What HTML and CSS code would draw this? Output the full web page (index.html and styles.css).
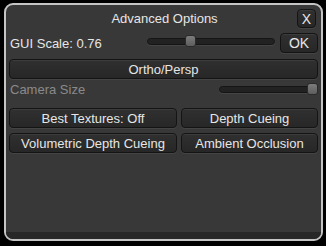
FILE: index.html
```html
<!DOCTYPE html>
<html lang="en">
  <head>
    <meta charset="utf-8" />
    <title>Advanced Options</title>
    <link rel="stylesheet" href="styles.css">
  </head>
  <body>
    <div class="panel">
      <div class="title-row">
        <span class="title">Advanced Options</span>
        <button class="btn btn-close">X</button>
      </div>

      <div class="scale-row">
        <span class="label">GUI Scale: 0.76</span>
        <div class="slider scale-slider">
          <div class="thumb" style="left: 30%"></div>
        </div>
        <button class="btn btn-ok">OK</button>
      </div>

      <button class="btn btn-wide">Ortho/Persp</button>

      <div class="camera-row">
        <span class="label disabled">Camera Size</span>
        <div class="slider camera-slider">
          <div class="thumb thumb-end"></div>
        </div>
      </div>

      <div class="toggles">
        <button class="btn">Best Textures: Off</button>
        <button class="btn">Depth Cueing</button>
        <button class="btn">Volumetric Depth Cueing</button>
        <button class="btn">Ambient Occlusion</button>
      </div>

      <div class="footer"></div>
    </div>
  </body>
</html>
```

FILE: styles.css
```css
body {
  margin: 0;
  background: #000;
  font-family: "Liberation Sans", Arial, sans-serif;
  font-size: 13px;
  color: #e6e6e6;
}
.panel {
  box-sizing: border-box;
  margin: 3px 0 0 4px;
  width: 319px;
  height: 238px;
  border: 2px solid #c4c4c4;
  border-radius: 9px;
  background: #383838;
  overflow: hidden;
  display: flex;
  flex-direction: column;
  padding: 4px 3px 0 3px;
}
.title-row {
  display: grid;
  grid-template-columns: 1fr auto 1fr;
  align-items: center;
  height: 19px;
}
.title {
  grid-column: 2;
  padding-left: 2px;
}
.btn {
  box-sizing: border-box;
  height: 20px;
  padding: 0;
  border: 1px solid #141414;
  border-radius: 4px;
  background: linear-gradient(#303030, #272727);
  box-shadow: inset 0 1px 0 #3c3c3c, 0 1px 0 #444;
  font-family: inherit;
  font-size: 13px;
  color: #e6e6e6;
}
.btn:hover {
  background: linear-gradient(#3a3a3a, #2e2e2e);
}
.btn-close {
  grid-column: 3;
  justify-self: end;
  width: 19px;
  height: 19px;
  margin-right: 2px;
  font-size: 14px;
}
.scale-row {
  display: flex;
  align-items: center;
  margin-top: 5px;
  height: 20px;
}
.label {
  padding-left: 1px;
  width: 137px;
}
.disabled {
  color: #8a8a8a;
}
.slider {
  position: relative;
  box-sizing: border-box;
  height: 7px;
  border: 1px solid #151515;
  border-radius: 4px;
  background: #222;
  box-shadow: 0 1px 0 #444;
}
.thumb {
  position: absolute;
  top: -4px;
  width: 11px;
  height: 12px;
  box-sizing: border-box;
  margin-left: -1px;
  border: 1px solid #2a2a2a;
  border-radius: 3px;
  background: linear-gradient(#7c7c7c, #5e5e5e);
}
.thumb-end {
  right: -1px;
}
.scale-slider {
  width: 128px;
  margin-top: -4px;
}
.btn-ok {
  width: 38px;
  margin-left: auto;
  font-size: 14px;
}
.btn-wide {
  display: block;
  width: 100%;
  margin-top: 6px;
}
.camera-row {
  display: flex;
  align-items: center;
  justify-content: space-between;
  height: 12px;
  margin-top: 4px;
}
.camera-slider {
  width: 99px;
}
.toggles {
  display: grid;
  grid-template-columns: 168px 1fr;
  gap: 5px 4px;
  margin-top: 13px;
}
.footer {
  margin: auto -3px 0;
  height: 7px;
  background: #272727;
}
```
